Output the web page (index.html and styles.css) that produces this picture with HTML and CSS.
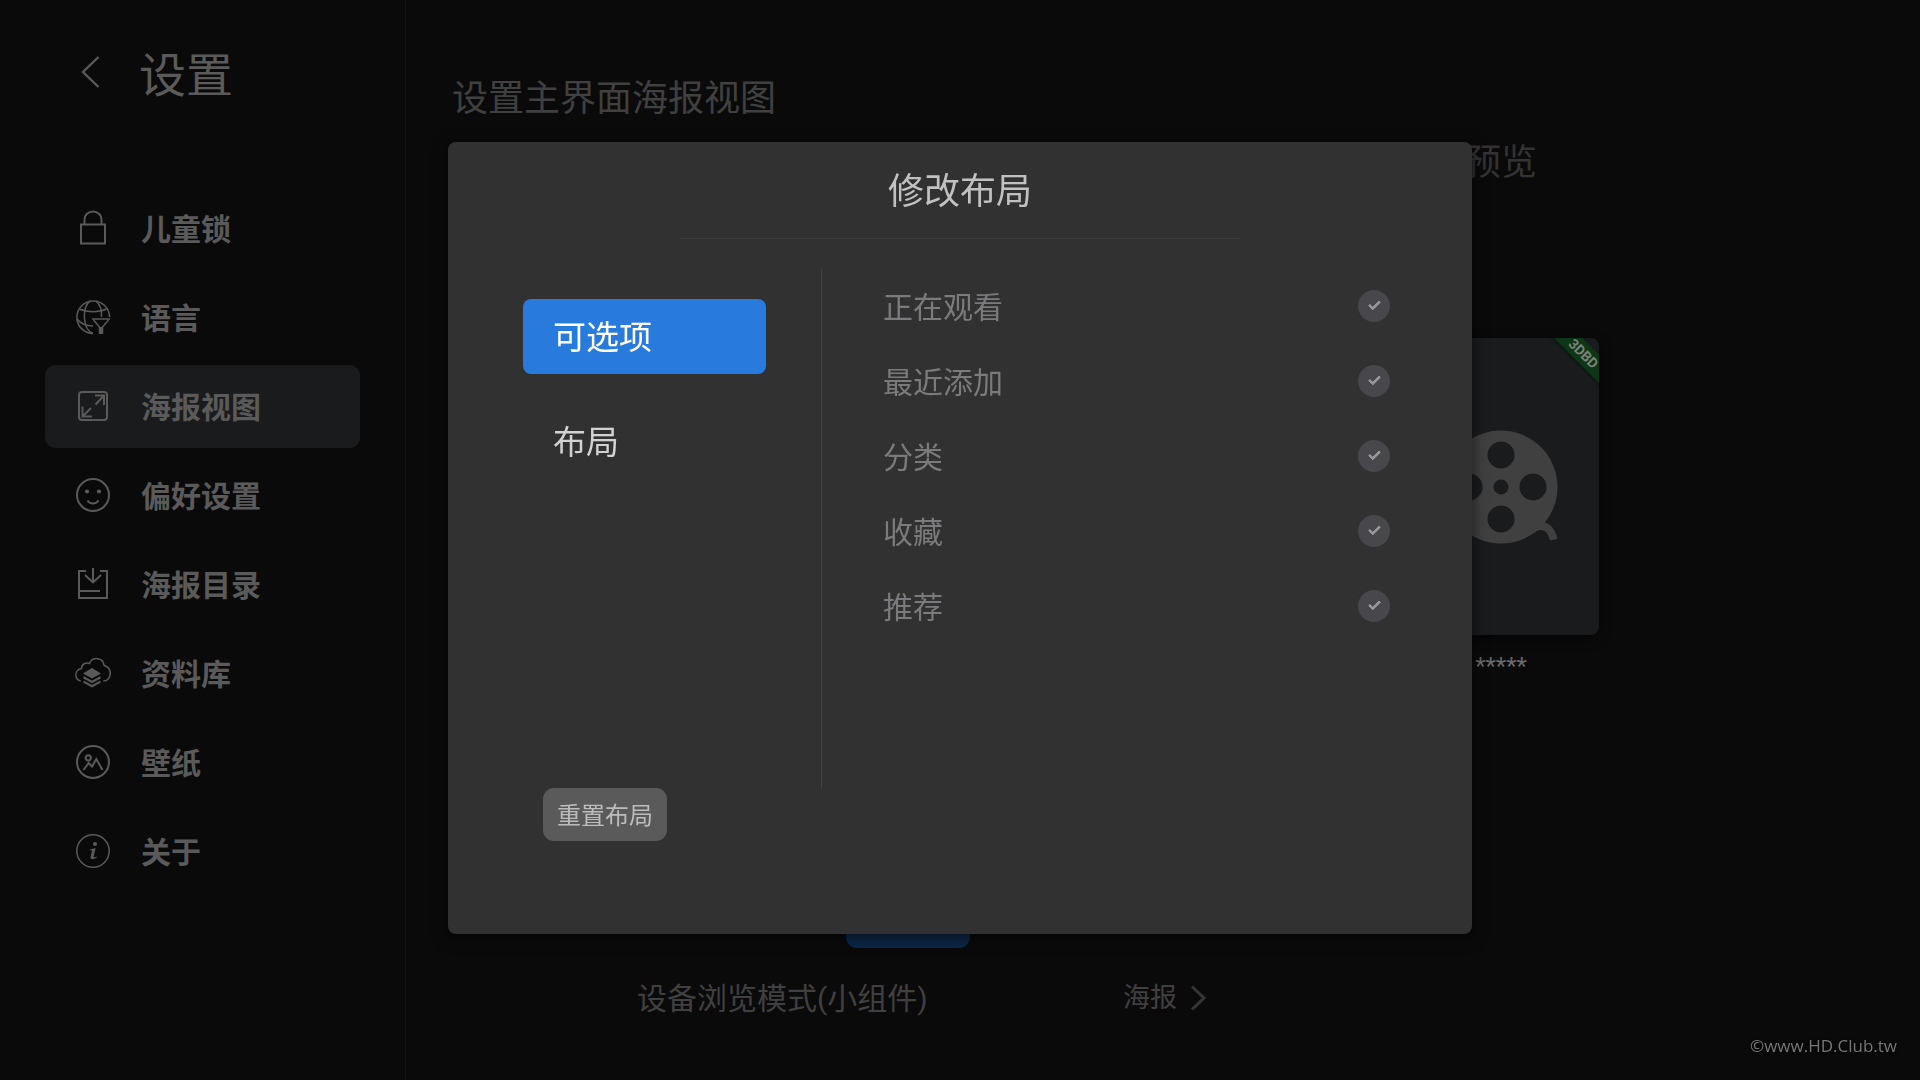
FILE: index.html
```html
<!DOCTYPE html>
<html lang="zh-CN">
  <head>
    <meta charset="UTF-8" />
    <meta name="viewport" content="width=device-width, initial-scale=1.0" />
    <title>设置</title>
    <link rel="stylesheet" href="styles.css">
  </head>
  <body>
    <aside class="sidebar">
      <header class="sidebar-header">
        <button class="back" type="button" aria-label="返回">
          <svg class="icon" viewBox="0 0 36 36"><path d="M23.5 3 L8 18 L23.5 33" stroke-width="2.4"/></svg>
        </button>
        <h1>设置</h1>
      </header>

      <nav class="menu">
        <a href="#">
          <svg class="icon" viewBox="0 0 36 36"><path d="M6 14.5H30V33.5H6Z M9.5 14.5V9.5a8.5 8 0 0 1 17 0V14.5"/></svg>
          儿童锁
        </a>
        <a href="#">
          <svg class="icon thin" viewBox="0 0 36 36">
            <path d="M18 34.5A16.3 16.3 0 1 1 34.5 18"/>
            <path d="M18 34.5C7 30 7 7 15 2 M21 2C25.5 6 27 12 26.5 18"/>
            <path d="M4.5 10C12 13.5 24 13.5 31.5 10 M2 20C6 25 11 27 18 27"/>
            <path d="M17 20H35 M18.5 21L24.5 28V35 M33.5 21L27.5 28V35"/>
            <path d="M26 28V35" stroke-width="3"/>
          </svg>
          语言
        </a>
        <a href="#" class="active">
          <svg class="icon" viewBox="0 0 36 36">
            <rect x="4" y="4" width="28" height="28" rx="3"/>
            <path d="M20 7.5H29V17 M29 7.5L20.5 16.5 M7.5 18.5V28.5H17 M7.5 28.5L16 20"/>
          </svg>
          海报视图
        </a>
        <a href="#">
          <svg class="icon" viewBox="0 0 36 36">
            <circle cx="18" cy="18" r="16"/>
            <path d="M12.5 23.5C15 27.5 21 27.5 23.5 23.5"/>
            <circle class="fill" cx="12" cy="14.5" r="2.1"/>
            <circle class="fill" cx="24" cy="14.5" r="2.1"/>
          </svg>
          偏好设置
        </a>
        <a href="#">
          <svg class="icon" viewBox="0 0 36 36"><path d="M11 5H4V32H32V5H25 M18 2V16.5 M10 9L18 16.5L26 9 M4 25H25"/></svg>
          海报目录
        </a>
        <a href="#">
          <svg class="icon thin" viewBox="0 0 36 36">
            <path d="M5.7 26C2.5 25 0.8 22.5 0.8 20C0.8 16.5 3.5 14 6.5 13.5C6.5 9 11 7 14.5 8.5C17.5 1.5 28 2 29 10.2C33 11.5 35.3 15 35.3 18.5C35.3 23 32 26 28.3 26"/>
            <path class="fill" d="M17 13L26 18.5L17 23.5L8 18.5Z"/>
            <path d="M8.5 22.3L17 27L25.5 22.3 M8.5 26.6L17 31.3L25.5 26.6" stroke-width="2.2"/>
          </svg>
          资料库
        </a>
        <a href="#">
          <svg class="icon" viewBox="0 0 36 36">
            <circle cx="18" cy="18" r="16"/>
            <circle cx="13.3" cy="13.8" r="2.6"/>
            <path d="M8.5 26L13.7 19L17 22.5L21.3 15L27.5 26"/>
          </svg>
          壁纸
        </a>
        <a href="#">
          <svg class="icon thin" viewBox="0 0 36 36">
            <circle cx="18" cy="18" r="16.2"/>
            <circle class="fill" cx="20" cy="11" r="2.1"/>
            <path class="fill" d="M14.8 16.5L20.6 15L18.6 23.8C18.5 24.8 19.3 24.8 21.6 23.6L21.8 24.6C18 27.2 15 26.6 15.6 24L17.1 17.3L14.6 17.3Z"/>
          </svg>
          关于
        </a>
      </nav>
    </aside>

    <main class="main">
      <h2>设置主界面海报视图</h2>
      <div class="view">
        <section class="options">
          <button class="edit-layout" type="button" aria-label="修改布局"></button>
          <div class="option-row">
            <span>设备浏览模式(小组件)</span>
            <button class="option-value" type="button">
              海报
              <svg viewBox="0 0 18 28"><path d="M3 2.5L15 14L3 25.5"/></svg>
            </button>
          </div>
        </section>

        <section class="preview">
          <h3>预览</h3>
          <div class="poster">
            <span class="ribbon">3DBD</span>
            <svg class="reel" viewBox="0 0 116 116">
              <path fill-rule="evenodd" d="M58 1.5a56.5 56.5 0 1 1 0 113a56.5 56.5 0 1 1 0-113Z
                M58 12.5a13.5 13.5 0 1 0 0 27a13.5 13.5 0 1 0 0-27Z
                M58 76.5a13.5 13.5 0 1 0 0 27a13.5 13.5 0 1 0 0-27Z
                M26 44.5a13.5 13.5 0 1 0 0 27a13.5 13.5 0 1 0 0-27Z
                M90 44.5a13.5 13.5 0 1 0 0 27a13.5 13.5 0 1 0 0-27Z
                M58 50.5a7.5 7.5 0 1 0 0 15a7.5 7.5 0 1 0 0-15Z"/>
              <path d="M92 103C99 98.5 105 102 107 111.5L114.5 110C112.5 101 108 94.5 101 93.5L92 96Z"/>
            </svg>
          </div>
          <p>*****</p>
        </section>
      </div>
    </main>

    <!-- Layout dialog -->
    <div class="overlay">
      <div class="dialog" role="dialog" aria-labelledby="dialog-title">
        <h2 id="dialog-title">修改布局</h2>
        <div class="dialog-body">
          <div class="tabs">
            <button class="tab selected" type="button">可选项</button>
            <button class="tab" type="button">布局</button>
          </div>
          <div class="checks">
            <label>正在观看 <input type="checkbox" checked disabled /></label>
            <label>最近添加 <input type="checkbox" checked disabled /></label>
            <label>分类 <input type="checkbox" checked disabled /></label>
            <label>收藏 <input type="checkbox" checked disabled /></label>
            <label>推荐 <input type="checkbox" checked disabled /></label>
          </div>
        </div>
        <button class="reset" type="button">重置布局</button>
      </div>
    </div>

    <footer class="copyright">©www.HD.Club.tw</footer>
  </body>
</html>
```
FILE: styles.css
```css
* {
  margin: 0;
  padding: 0;
  box-sizing: border-box;
}
body {
  display: flex;
  min-height: 100vh;
  background: #0a0a0a;
  color: #404040;
  font-family: Roboto, "Noto Sans CJK SC", sans-serif;
  line-height: 1.5;
}
h1,
h2,
h3 {
  font-weight: 400;
}
button {
  border: none;
  background: none;
  color: inherit;
  font-family: inherit;
  line-height: inherit;
  cursor: pointer;
}

/* Sidebar */
.sidebar {
  width: 406px;
  flex-shrink: 0;
  padding: 43px 45px;
  border-right: 1px solid #131314;
  color: #5a5a5a;
}
.sidebar-header {
  display: flex;
  align-items: center;
  gap: 28px;
  padding-left: 30px;
  margin-bottom: 78px;
}
.sidebar-header h1 {
  font-size: 47px;
  line-height: 66px;
}
.back {
  height: 44px;
  padding-bottom: 8px;
}
.icon {
  display: block;
  width: 36px;
  height: 36px;
  flex-shrink: 0;
  fill: none;
  stroke: currentColor;
  stroke-width: 2;
}
.icon.thin {
  stroke-width: 1.5;
}
.icon .fill {
  fill: currentColor;
  stroke: none;
}
.menu {
  display: flex;
  flex-direction: column;
  gap: 6px;
}
.menu a {
  display: flex;
  align-items: center;
  gap: 30px;
  height: 83px;
  padding: 2px 0 0 30px;
  border-radius: 10px;
  color: inherit;
  font-size: 30px;
  font-weight: 700;
  text-decoration: none;
}
.menu .icon {
  margin-bottom: 4px;
}
.menu a.active {
  background: #1a1b1d;
}

/* Main page */
.main {
  flex: 1;
  display: flex;
  flex-direction: column;
  padding: 72px 0 52px 46px;
}
.main h2 {
  font-size: 36px;
  line-height: 54px;
}
.view {
  flex: 1;
  display: grid;
  grid-template-columns: 912fr 274fr 282fr;
}
.options {
  display: flex;
  flex-direction: column;
  justify-content: flex-end;
  align-items: center;
  gap: 20px;
}
.edit-layout {
  width: 124px;
  height: 53px;
  border-radius: 11px;
  background: #0c284a;
}
.option-row {
  display: flex;
  justify-content: space-between;
  align-items: center;
  width: 100%;
  height: 60px;
  padding: 0 157px 0 185px;
  font-size: 30px;
}
.option-value {
  display: flex;
  align-items: center;
  gap: 12px;
  font-size: 27px;
}
.option-value svg {
  width: 18px;
  height: 28px;
  fill: none;
  stroke: #363636;
  stroke-width: 3;
}
.preview {
  display: flex;
  flex-direction: column;
  align-items: center;
  padding-top: 10px;
}
.preview h3 {
  margin-bottom: 148px;
  color: #333333;
  font-size: 36px;
  line-height: 54px;
}
.poster {
  position: relative;
  display: flex;
  align-items: center;
  justify-content: center;
  width: 196px;
  height: 297px;
  border-radius: 8px;
  background: #1a1b1d;
  box-shadow: 0 4px 12px rgba(0, 0, 0, 0.5);
  overflow: hidden;
}
.reel {
  width: 116px;
  height: 116px;
  fill: #404040;
}
.ribbon {
  position: absolute;
  top: 7px;
  right: -36px;
  width: 100px;
  padding-right: 4px;
  background: #0c3615;
  box-shadow: 0 1px 3px rgba(0, 0, 0, 0.5);
  color: #7b827c;
  font-size: 14px;
  font-weight: 700;
  line-height: 20px;
  text-align: center;
  transform: rotate(45deg);
}
.preview p {
  margin-top: 16px;
  color: #6a6a6a;
  font-size: 24px;
  line-height: 30px;
}

/* Dialog */
.overlay {
  position: fixed;
  inset: 0;
  display: flex;
  align-items: center;
  justify-content: center;
  padding-bottom: 4px;
}
.dialog {
  width: 1024px;
  max-width: 90vw;
  padding: 23px 0 93px;
  border-radius: 8px;
  background: #313131;
  box-shadow: 0 4px 16px rgba(0, 0, 0, 0.6);
}
.dialog h2 {
  width: 560px;
  margin: 0 auto 30px;
  padding-bottom: 19px;
  border-bottom: 1px solid #3c3c3c;
  color: #c1c1c1;
  font-size: 36px;
  line-height: 54px;
  text-align: center;
}
.dialog-body {
  display: flex;
  min-height: 519px;
}
.tabs {
  display: flex;
  flex-direction: column;
  gap: 30px;
  width: 373px;
  padding: 30px 0 0 75px;
}
.tab {
  width: 243px;
  height: 75px;
  padding: 2px 0 0 30px;
  border-radius: 8px;
  color: #d2d2d2;
  font-size: 33px;
  text-align: left;
}
.tab.selected {
  background: #287add;
  color: #ffffff;
}
.checks {
  flex: 1;
  padding: 0 82px 0 61px;
  border-left: 1px solid #434343;
}
.checks label {
  display: flex;
  align-items: center;
  justify-content: space-between;
  height: 75px;
  padding-top: 2px;
  color: #7b7b7d;
  font-size: 30px;
}
.checks input {
  appearance: none;
  display: flex;
  justify-content: center;
  width: 32px;
  height: 32px;
  margin-bottom: 4px;
  border-radius: 50%;
  background: #48474c;
}
.checks input:checked::after {
  content: "";
  width: 4px;
  height: 9px;
  margin-top: 8px;
  border: solid #97969a;
  border-width: 0 3px 3px 0;
  border-radius: 1px;
  transform: rotate(45deg);
}
.reset {
  display: block;
  width: 124px;
  height: 53px;
  padding-top: 2px;
  margin-left: 95px;
  border-radius: 11px;
  background: #5a5a5a;
  color: #bcbcbc;
  font-size: 24px;
}

.copyright {
  position: fixed;
  right: 23px;
  bottom: 22px;
  color: #777777;
  font-family: "Open Sans", sans-serif;
  font-size: 17px;
  line-height: 24px;
  text-shadow: 0 0 3px #000000;
}
```
